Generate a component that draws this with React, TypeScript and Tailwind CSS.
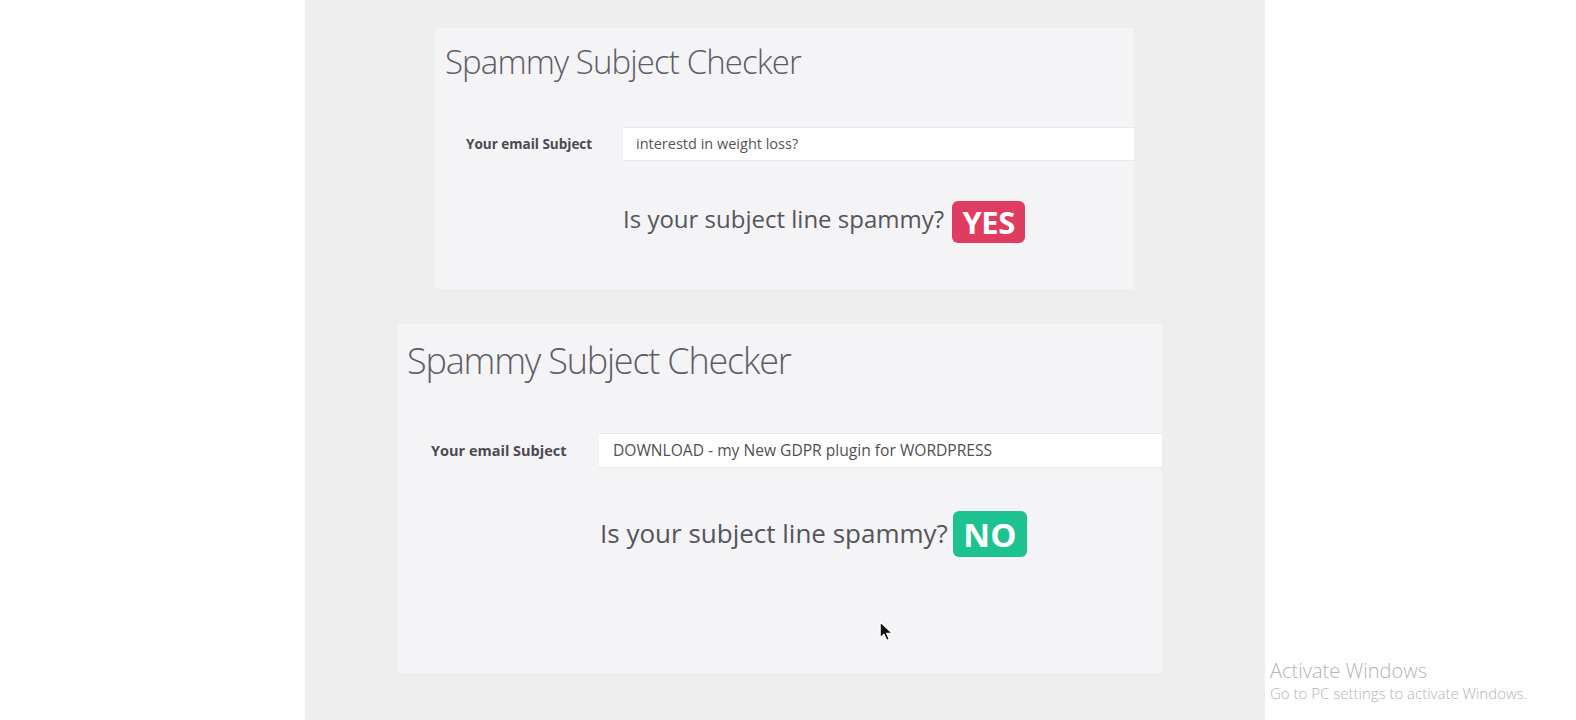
import React from "react";

const OS = { fontFamily: '"Open Sans", "Noto Sans", sans-serif' } as React.CSSProperties;

function Cursor() {
  return (
    <svg className="absolute left-[879px] top-[621px]" width="15" height="21" viewBox="0 0 14 20">
      <path d="M1 1 L1 16 L4.6 12.6 L7.2 18.4 L9.6 17.3 L7.1 11.7 L12 11.4 Z" fill="#111" stroke="#fff" strokeWidth="1" strokeLinejoin="round" />
    </svg>
  );
}

export default function App() {
  return (
    <div className="relative flex w-[1576px] h-[720px] bg-white overflow-hidden font-['Open_Sans',sans-serif]" style={OS}>
      <div className="w-[305px] shrink-0 bg-white" />
      <div className="w-[960px] shrink-0 bg-[#eeeeee] flex flex-col">
        {/* Card 1 */}
        <div className="ml-[130px] mt-[28px] w-[699px] h-[261px] bg-[#f4f3f6] flex flex-col">
          <div className="pl-[10px] pt-[11px] text-[33px] leading-[46px] font-light text-[#5e5d66] tracking-[-0.9px]">
            Spammy Subject Checker
          </div>
          <div className="mt-[42px] flex items-center pl-[31px]">
            <div className="w-[157px] shrink-0 text-[13.5px] font-bold text-[#4a4a50]">Your email Subject</div>
            <div className="flex-1 h-[34px] bg-white border-y border-[#e8e8ea] flex items-center pl-[13px] text-[14.5px] text-[#555558]">
              interestd in weight loss?
            </div>
          </div>
          <div className="mt-[40px] flex items-start pl-[188px]">
            <span className="mt-[6px] text-[24px] text-[#555559] leading-none">Is your subject line spammy?</span>
            <span className="ml-[8px] h-[42px] w-[73px] rounded-[6px] bg-[#e03c60] text-white text-[31px] font-bold flex items-center justify-center leading-none tracking-[-0.5px]">
              YES
            </span>
          </div>
        </div>
        {/* Card 2 */}
        <div className="ml-[93px] mt-[35px] w-[764px] h-[349px] bg-[#f4f3f6] flex flex-col">
          <div className="pl-[9px] pt-[12px] text-[36px] leading-[50px] font-light text-[#5e5d66] tracking-[-1.2px]">
            Spammy Subject Checker
          </div>
          <div className="mt-[47px] flex items-center pl-[33px]">
            <div className="w-[168px] shrink-0 text-[14.5px] font-bold text-[#4a4a50]">Your email Subject</div>
            <div className="flex-1 h-[35px] bg-white border-y border-[#e8e8ea] flex items-center pl-[14px] text-[15.6px] text-[#4f4f52]">
              DOWNLOAD - my New GDPR plugin for WORDPRESS
            </div>
          </div>
          <div className="mt-[43px] flex items-start pl-[202px]">
            <span className="mt-[9px] text-[26px] text-[#555559] leading-none">Is your subject line spammy?</span>
            <span className="ml-[5px] h-[46px] w-[74px] rounded-[6px] bg-[#1ec291] text-white text-[33px] font-bold flex items-center justify-center leading-none">
              NO
            </span>
          </div>
        </div>
      </div>
      <div className="flex-1 bg-white flex flex-col justify-end pb-[17px] pl-[5px]">
        <div className="text-[20px] font-light text-[#b4b4b4] leading-[24px]">Activate Windows</div>
        <div className="text-[15px] font-light text-[#b4b4b4] leading-[20px]">Go to PC settings to activate Windows.</div>
      </div>
      <Cursor />
    </div>
  );
}
